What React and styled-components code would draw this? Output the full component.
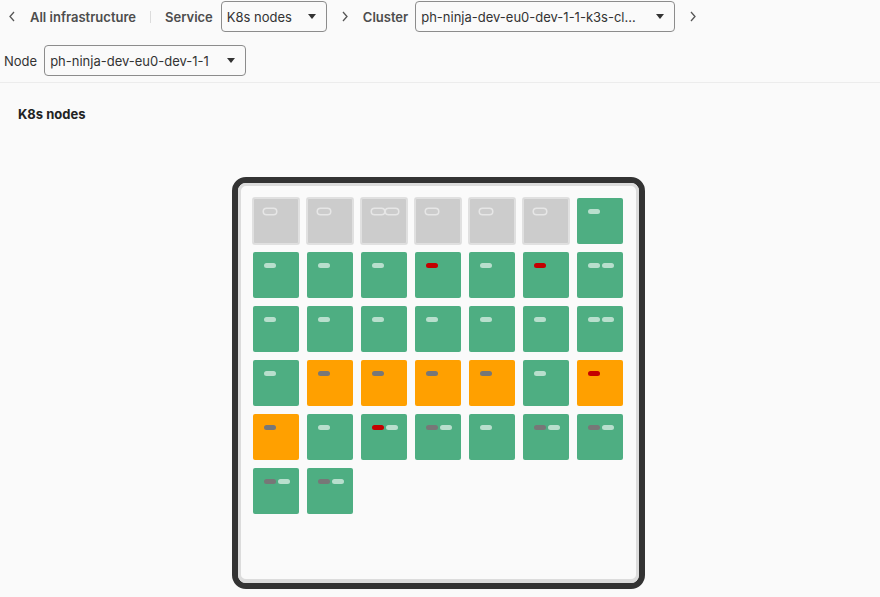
import React from 'react'
import styled, { createGlobalStyle } from 'styled-components'

const GlobalStyle = createGlobalStyle`
  html, body {
    margin: 0;
    padding: 0;
    background: #fafafa;
    font-family: Inter, "Noto Sans", sans-serif;
    color: #333;
  }
  * { box-sizing: border-box; }
`

const Header = styled.div`
  display: flex;
  flex-direction: column;
  gap: 13px;
  padding: 1px 0 6px 4px;
  border-bottom: 1px solid #ececec;
`

const Row = styled.div`
  display: flex;
  align-items: center;
  gap: 14px;
  height: 31px;
  padding-left: ${p => p.$indent || 0}px;
`

const Group = styled.div`
  display: flex;
  align-items: center;
  gap: ${p => p.$gap || 8}px;
`

const Crumb = styled.span`
  font-size: 13px;
  font-weight: 600;
  color: #4d4d4d;
  white-space: nowrap;
`

const Label = styled.span`
  font-size: 13px;
  color: #333;
`

const Sep = styled.span`
  width: 1px;
  height: 12px;
  background: #dcdcdc;
`

const SelectBox = styled.div`
  display: flex;
  align-items: center;
  justify-content: space-between;
  width: ${p => p.$width}px;
  height: 31px;
  padding: 0 10px 0 5px;
  border: 1px solid #8c8c8c;
  border-radius: 4px;
  background: #fafafa;
  font-size: 13px;
  color: #333;
  gap: ${p => p.$gap || 6}px;
`

const SelectText = styled.span`
  overflow: hidden;
  white-space: nowrap;
  text-overflow: ellipsis;
`

const Caret = styled.span`
  flex: none;
  width: 0;
  height: 0;
  border-left: 4px solid transparent;
  border-right: 4px solid transparent;
  border-top: 5px solid #333;
`

const Chevron = ({ dir = 'right' }) => (
  <svg width="8" height="11" viewBox="0 0 8 11" fill="none" stroke="#555" strokeWidth="1.3">
    {dir === 'right' ? <polyline points="2,1 6,5.5 2,10" /> : <polyline points="6,1 2,5.5 6,10" />}
  </svg>
)

const Select = ({ width, value, gap }) => (
  <SelectBox $width={width} $gap={gap}>
    <SelectText>{value}</SelectText>
    <Caret />
  </SelectBox>
)

const Main = styled.div`
  padding: 22px 22px 0 18px;
`

const Title = styled.h2`
  margin: 0;
  font-size: 13px;
  font-weight: 700;
  color: #222;
  line-height: 18px;
`

const Rack = styled.div`
  width: 413px;
  height: 412px;
  margin: 54px auto 0;
  border: 6px solid #333;
  border-radius: 14px;
  background: #fafafa;
`

const RackInner = styled.div`
  height: 100%;
  border: 3px solid #dcdcdc;
  border-bottom-width: 4px;
  border-radius: 8px;
  padding: 12px 12px;
`

const Grid = styled.div`
  display: grid;
  grid-template-columns: repeat(7, 46px);
  grid-auto-rows: 46px;
  gap: 8px;
`

const cellColors = {
  empty: '#cccccc',
  ok: '#4eae82',
  warn: '#ffa000',
}

const Cell = styled.div`
  display: flex;
  align-items: flex-start;
  gap: 2px;
  padding: 11px;
  border-radius: 2px;
  background: ${p => cellColors[p.$status]};
  box-shadow: ${p => (p.$status === 'empty' ? '0 0 0 1px #e0e0e0, inset 0 0 0 1px #e0e0e0' : 'none')};
`

const pillColors = {
  light: 'rgba(255,255,255,0.6)',
  grey: '#777777',
  red: '#c40000',
  empty: '#cccccc',
}

const Pill = styled.span`
  flex: none;
  width: 12px;
  height: 5px;
  border-radius: 3px;
  background: ${p => pillColors[p.$kind]};
  box-shadow: ${p => (p.$kind === 'empty' ? '0 0 0 1.5px #e6e6e6' : 'none')};
`

const c = (status, ...pills) => ({ status, pills })

const nodes = [
  c('empty', 'empty'), c('empty', 'empty'), c('empty', 'empty', 'empty'), c('empty', 'empty'),
  c('empty', 'empty'), c('empty', 'empty'), c('ok', 'light'),

  c('ok', 'light'), c('ok', 'light'), c('ok', 'light'), c('ok', 'red'),
  c('ok', 'light'), c('ok', 'red'), c('ok', 'light', 'light'),

  c('ok', 'light'), c('ok', 'light'), c('ok', 'light'), c('ok', 'light'),
  c('ok', 'light'), c('ok', 'light'), c('ok', 'light', 'light'),

  c('ok', 'light'), c('warn', 'grey'), c('warn', 'grey'), c('warn', 'grey'),
  c('warn', 'grey'), c('ok', 'light'), c('warn', 'red'),

  c('warn', 'grey'), c('ok', 'light'), c('ok', 'red', 'light'), c('ok', 'grey', 'light'),
  c('ok', 'light'), c('ok', 'grey', 'light'), c('ok', 'grey', 'light'),

  c('ok', 'grey', 'light'), c('ok', 'grey', 'light'),
]

const App = () => {
  return (
    <>
      <GlobalStyle />
      <Header>
        <Row $indent={4}>
          <Chevron dir="left" />
          <Crumb>All infrastructure</Crumb>
          <Sep />
          <Group>
            <Crumb>Service</Crumb>
            <Select width={106} value="K8s nodes" />
          </Group>
          <Chevron />
          <Group $gap={7}>
            <Crumb>Cluster</Crumb>
            <Select width={260} gap={18} value="ph-ninja-dev-eu0-dev-1-1-k3s-cluster" />
          </Group>
          <Chevron />
        </Row>
        <Row>
          <Group $gap={7}>
            <Label>Node</Label>
            <Select width={202} value="ph-ninja-dev-eu0-dev-1-1" />
          </Group>
        </Row>
      </Header>
      <Main>
        <Title>K8s nodes</Title>
        <Rack>
          <RackInner>
            <Grid>
              {nodes.map((n, i) => (
                <Cell key={i} $status={n.status}>
                  {n.pills.map((p, j) => (
                    <Pill key={j} $kind={p} />
                  ))}
                </Cell>
              ))}
            </Grid>
          </RackInner>
        </Rack>
      </Main>
    </>
  )
}

export default App
